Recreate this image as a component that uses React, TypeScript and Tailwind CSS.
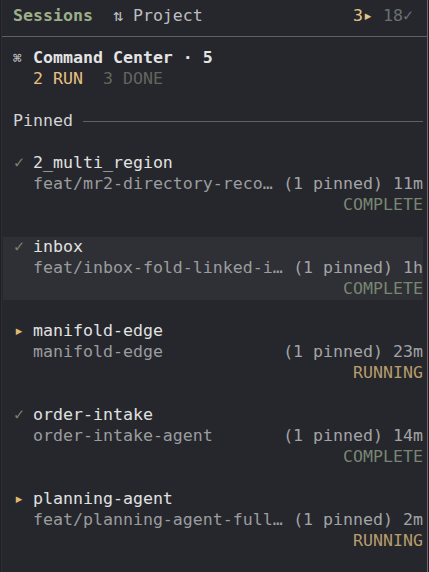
import React from 'react'

type Session = {
  name: string
  branch: string
  meta: string
  status: 'COMPLETE' | 'RUNNING'
  selected?: boolean
}

const SESSIONS: Session[] = [
  { name: '2_multi_region', branch: 'feat/mr2-directory-reco…', meta: '(1 pinned) 11m', status: 'COMPLETE' },
  { name: 'inbox', branch: 'feat/inbox-fold-linked-i…', meta: '(1 pinned) 1h', status: 'COMPLETE', selected: true },
  { name: 'manifold-edge', branch: 'manifold-edge', meta: '(1 pinned) 23m', status: 'RUNNING' },
  { name: 'order-intake', branch: 'order-intake-agent', meta: '(1 pinned) 14m', status: 'COMPLETE' },
  { name: 'planning-agent', branch: 'feat/planning-agent-full…', meta: '(1 pinned) 2m', status: 'RUNNING' },
]

function Line({ children, className = '' }: { children?: React.ReactNode; className?: string }) {
  return <div className={`flex h-[21px] items-center whitespace-pre ${className}`}>{children}</div>
}

function SessionRow({ s }: { s: Session }) {
  const running = s.status === 'RUNNING'
  return (
    <div className="mb-[21px]">
      <div className={s.selected ? 'bg-[#2e3035]' : ''}>
        <Line>
          <span className={`w-[30px] pl-[11px] ${running ? 'text-[#e2b872]' : 'text-[#7b8172]'}`}>
            {running ? '▸' : '✓'}
          </span>
          <span className="text-[#e1e1e1]">{s.name}</span>
        </Line>
        <Line className="justify-between pl-[30px]">
          <span className="text-[#9b9c9e]">{s.branch}</span>
          <span className="text-[#a3a4a6]">{s.meta}</span>
        </Line>
        <Line className="justify-end">
          <span className={running ? 'text-[#b89c6c]' : 'text-[#788672]'}>{s.status}</span>
        </Line>
      </div>
    </div>
  )
}

export default function App() {
  return (
    <div className="flex h-[572px] w-[429px] bg-[#1f2024] font-['DejaVu_Sans_Mono',monospace] text-[16.6px]">
      <div className="w-[2px] border-r border-[#2c2e33]" />
      <div className="flex-1 bg-[#25272c] pt-[6px]">
        <Line className="justify-between pl-[11px] pr-[14px]">
          <span>
            <span className="font-bold text-[#9fae8a]">Sessions</span>
            <span className="text-[#bdbebf]">{'  ⇅ Project'}</span>
          </span>
          <span>
            <span className="text-[#e4c387]">3▸</span>
            <span className="text-[#6c6f74]">{' 18✓'}</span>
          </span>
        </Line>
        <div className="flex h-[19px] items-center">
          <div className="h-px w-full bg-[#5f6166]" />
        </div>
        <div className="pl-[1px] pr-[4px] pt-[2px]">
          <Line className="pl-[10px]">
            <span className="w-[20px] text-[14px] font-bold text-[#b8b9bb]">⌘</span>
            <span className="font-bold text-[#e4e4e4]">Command Center · 5</span>
          </Line>
          <Line className="pl-[30px]">
            <span className="text-[#e7c082]">2 RUN</span>
            <span className="text-[#62665f]">{'  3 DONE'}</span>
          </Line>
          <Line />
          <Line className="pl-[10px]">
            <span className="text-[#d4d4d5]">Pinned </span>
            <div className="h-px flex-1 bg-[#5f6166]" />
          </Line>
          <Line />
          {SESSIONS.map((s) => (
            <SessionRow key={s.name} s={s} />
          ))}
        </div>
      </div>
      <div className="w-[2px] border-l border-[#6a6c70] bg-[#1f2024]" />
    </div>
  )
}
